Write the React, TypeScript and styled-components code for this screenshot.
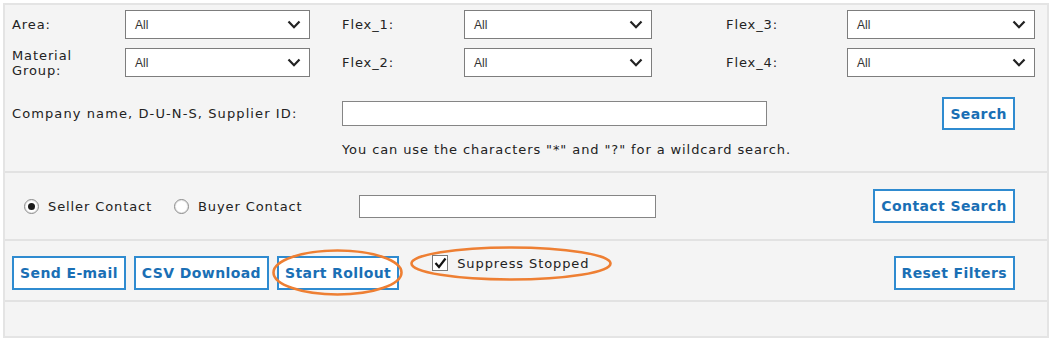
import React from "react";
import styled, { createGlobalStyle } from "styled-components";

const Global = createGlobalStyle`
  html, body { margin: 0; padding: 0; background: #ffffff; }
  body { font-family: "DejaVu Sans", Verdana, sans-serif; }
  * { box-sizing: border-box; }
`;

const Panel = styled.div`
  margin: 3px 0 0 3px;
  width: 1046px;
  border: 2px solid #e4e4e4;
  background: #f4f4f4;
  display: flex;
  flex-direction: column;
`;

const Section = styled.div<{ $h: number; $first?: boolean }>`
  height: ${(p) => p.$h + (p.$first ? 0 : 2)}px;
  border-top: ${(p) => (p.$first ? "none" : "2px solid #e2e2e2")};
  padding: 0 32px 0 7px;
  display: flex;
  flex-direction: column;
`;

const FilterGrid = styled.div`
  margin-top: 5px;
  display: grid;
  grid-template-columns: 113px 185px 154px 188px 195px 188px;
  grid-auto-rows: 29px;
  row-gap: 9px;
  align-items: center;
`;

const Label = styled.div<{ $indent?: number }>`
  font-size: 13px;
  letter-spacing: 0.9px;
  color: #222;
  line-height: 15px;
  white-space: nowrap;
  padding-left: ${(p) => p.$indent ?? 0}px;
`;

const SelectBox = styled.div`
  height: 29px;
  background: #fff;
  border: 1px solid #7d7d7d;
  display: flex;
  align-items: center;
  justify-content: space-between;
  padding: 0 8px 0 9px;
  font-family: "Liberation Sans", Arial, sans-serif;
  font-size: 12px;
  color: #333;
`;

const Chevron = () => (
  <svg width="14" height="9" viewBox="0 0 14 9">
    <polyline points="1.5,1.5 7,7.2 12.5,1.5" fill="none" stroke="#222" strokeWidth="2.2" />
  </svg>
);

const Select = ({ value }: { value: string }) => (
  <SelectBox>
    <span>{value}</span>
    <Chevron />
  </SelectBox>
);

const SearchRow = styled.div`
  margin-top: 20px;
  height: 33px;
  display: flex;
  align-items: center;
`;

const SearchLabel = styled(Label)`
  width: 330px;
  letter-spacing: 1.1px;
`;

const TextInput = styled.div<{ $w: number; $h: number }>`
  width: ${(p) => p.$w}px;
  height: ${(p) => p.$h}px;
  flex-shrink: 0;
  background: #fff;
  border: 1px solid #858585;
`;

const Spacer = styled.div`
  flex: 1;
`;

const Button = styled.div<{ $h?: number }>`
  height: ${(p) => p.$h ?? 34}px;
  padding: 0 6px;
  flex-shrink: 0;
  background: #fff;
  border: 2px solid #2f8bd0;
  display: flex;
  align-items: center;
  justify-content: center;
  font-weight: bold;
  font-size: 14px;
  letter-spacing: 0.4px;
  color: #1a6fb5;
  white-space: nowrap;
`;

const Hint = styled.div`
  margin: 12px 0 0 330px;
  font-size: 13px;
  letter-spacing: 0.9px;
  line-height: 16px;
  color: #222;
  white-space: nowrap;
`;

const ContactRow = styled.div`
  margin-top: 16px;
  height: 34px;
  display: flex;
  align-items: center;
`;

const RadioOption = styled.label<{ $w: number }>`
  display: flex;
  align-items: center;
  width: ${(p) => p.$w}px;
  flex-shrink: 0;
  font-size: 13px;
  letter-spacing: 0.9px;
  color: #222;
  gap: 9px;
  white-space: nowrap;
`;

const RadioCircle = styled.span<{ $on?: boolean }>`
  width: 15px;
  height: 15px;
  flex-shrink: 0;
  margin-left: 12px;
  border-radius: 50%;
  border: 1px solid #8a8a8a;
  background: #fff;
  box-shadow: inset 0 0 0 1px #e8e8e8;
  display: flex;
  align-items: center;
  justify-content: center;
  &::after {
    content: "";
    width: 7px;
    height: 7px;
    border-radius: 50%;
    background: ${(p) => (p.$on ? "#1a1a1a" : "transparent")};
  }
`;

const ActionRow = styled.div`
  position: relative;
  margin-top: 15px;
  height: 34px;
  display: flex;
  align-items: center;
  gap: 8px;
`;

const CheckGroup = styled.label`
  margin-left: 25px;
  align-self: flex-start;
  margin-top: -1px;
  display: flex;
  align-items: center;
  gap: 9px;
  font-size: 13px;
  letter-spacing: 0.9px;
  color: #222;
  white-space: nowrap;
`;

const CheckBox = styled.span`
  width: 16px;
  height: 16px;
  flex-shrink: 0;
  background: #fff;
  border: 1px solid #7a7a7a;
  display: flex;
  align-items: center;
  justify-content: center;
`;

const Annotation = styled.svg<{ $x: number; $y: number }>`
  position: absolute;
  left: ${(p) => p.$x}px;
  top: ${(p) => p.$y}px;
  overflow: visible;
  pointer-events: none;
`;

const Ellipse = ({ x, y, w, h }: { x: number; y: number; w: number; h: number }) => (
  <Annotation $x={x} $y={y} width={w} height={h} viewBox={`0 0 ${w} ${h}`}>
    <ellipse cx={w / 2} cy={h / 2} rx={w / 2 - 1.5} ry={h / 2 - 1.5} fill="none" stroke="#ee7f33" strokeWidth="2.6" />
  </Annotation>
);

export default function App() {
  return (
    <>
      <Global />
      <Panel>
        <Section $h={166} $first>
          <FilterGrid>
            <Label>Area:</Label>
            <Select value="All" />
            <Label $indent={32}>Flex_1:</Label>
            <Select value="All" />
            <Label $indent={74}>Flex_3:</Label>
            <Select value="All" />
            <Label>
              Material
              <br />
              Group:
            </Label>
            <Select value="All" />
            <Label $indent={32}>Flex_2:</Label>
            <Select value="All" />
            <Label $indent={74}>Flex_4:</Label>
            <Select value="All" />
          </FilterGrid>
          <SearchRow>
            <SearchLabel>Company name, D-U-N-S, Supplier ID:</SearchLabel>
            <TextInput $w={425} $h={25} />
            <Spacer />
            <Button $h={33}>Search</Button>
          </SearchRow>
          <Hint>You can use the characters "*" and "?" for a wildcard search.</Hint>
        </Section>
        <Section $h={66}>
          <ContactRow>
            <RadioOption $w={150}>
              <RadioCircle $on />
              Seller Contact
            </RadioOption>
            <RadioOption $w={197}>
              <RadioCircle />
              Buyer Contact
            </RadioOption>
            <TextInput $w={297} $h={23} />
            <Spacer />
            <Button>Contact Search</Button>
          </ContactRow>
        </Section>
        <Section $h={59}>
          <ActionRow>
            <Button>Send E-mail</Button>
            <Button>CSV Download</Button>
            <Button>Start Rollout</Button>
            <CheckGroup>
              <CheckBox>
                <svg width="13" height="12" viewBox="0 0 13 12">
                  <polyline points="1.5,6 5,10 11.5,1.5" fill="none" stroke="#111" strokeWidth="2.2" />
                </svg>
              </CheckBox>
              Suppress Stopped
            </CheckGroup>
            <Spacer />
            <Button>Reset Filters</Button>
            <Ellipse x={260} y={-7} w={131} h={47} />
            <Ellipse x={398} y={-10} w={202} h={35} />
          </ActionRow>
        </Section>
        <Section $h={34} />
      </Panel>
    </>
  );
}
